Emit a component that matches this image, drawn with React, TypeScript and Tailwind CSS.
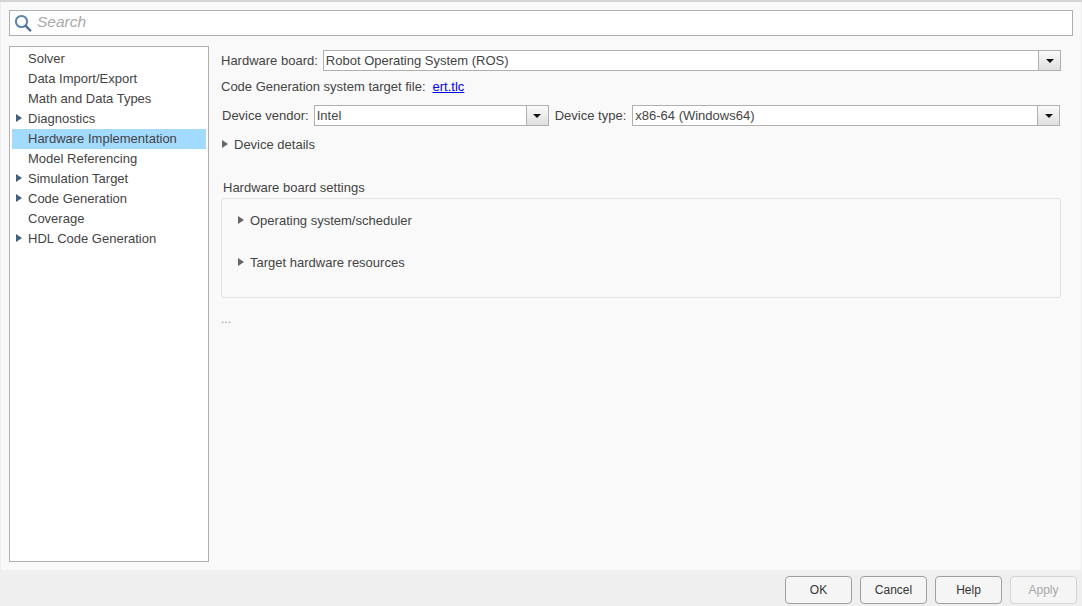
import React from 'react';

const treeItems = [
  { label: 'Solver' },
  { label: 'Data Import/Export' },
  { label: 'Math and Data Types' },
  { label: 'Diagnostics', arrow: true },
  { label: 'Hardware Implementation', selected: true },
  { label: 'Model Referencing' },
  { label: 'Simulation Target', arrow: true },
  { label: 'Code Generation', arrow: true },
  { label: 'Coverage' },
  { label: 'HDL Code Generation', arrow: true },
];

const Caret = () => (
  <svg className="w-[6px] h-[8px] shrink-0 -translate-y-px" viewBox="0 0 6 8">
    <path d="M0 0l6 4L0 8z" fill="#666666" />
  </svg>
);

const ComboArrow = () => (
  <span className="w-[22px] h-full shrink-0 flex items-center justify-center border-l border-[#b0b0b0] bg-gradient-to-b from-[#fafafa] to-[#dfdfdf]">
    <svg className="w-[8px] h-[4px]" viewBox="0 0 8 4">
      <path d="M0 0h8L4 4z" fill="#111111" />
    </svg>
  </span>
);

const Combo = ({ value, className }: { value: string; className: string }) => (
  <div className={`h-[21px] flex items-center bg-white border border-[#b0b0b0] ${className}`}>
    <span className="flex-1 pl-[2px] text-[#444444] truncate">{value}</span>
    <ComboArrow />
  </div>
);

const Footer = ({ label, disabled }: { label: string; disabled?: boolean }) => (
  <button
    className={`w-[67px] h-[28px] rounded-[4px] border bg-[#f5f5f5] text-[12px] ${
      disabled ? 'border-[#d4d4d4] text-[#a8a8a8]' : 'border-[#a0a0a0] text-[#333333]'
    }`}
  >
    {label}
  </button>
);

export default function App() {
  return (
    <div className="w-[1082px] h-[606px] flex flex-col overflow-hidden bg-[#efefef] font-['Liberation_Sans',sans-serif] text-[13px] text-[#444444]">
      <div className="h-[2px] bg-[#d4d4d4]" />

      <div className="flex-1 min-h-0 ml-px mr-px flex flex-col bg-[#f9f9f9] pt-[8px] pb-[8px] pl-[8px] pr-[8px]">
        {/* Search */}
        <div className="h-[26px] flex items-center bg-white border border-[#b0b0b0] pl-[4px]">
          <svg className="w-[18px] h-[18px] shrink-0" viewBox="0 0 18 18" fill="none">
            <circle cx="7.5" cy="7.5" r="5.6" stroke="#5b84ad" strokeWidth="2" />
            <path d="M11.8 12l4.4 4.4" stroke="#4a6f94" strokeWidth="2.4" strokeLinecap="round" />
          </svg>
          <span className="ml-[5px] text-[15.5px] leading-[20px] -translate-y-px italic text-[#a9a9a9]">Search</span>
        </div>

        <div className="flex-1 min-h-0 flex mt-[10px]">
          {/* Tree */}
          <div className="w-[200px] shrink-0 bg-white border border-[#b0b0b0] pt-[2px] pl-[2px] pr-[2px]">
            {treeItems.map(item => (
              <div
                key={item.label}
                className={`h-[20px] flex items-center ${item.selected ? 'bg-[#a3daff]' : ''}`}
              >
                <span className="w-[16px] pl-[4px] flex items-center">
                  {item.arrow && (
                    <svg className="w-[6px] h-[8px] -translate-y-px" viewBox="0 0 6 8">
                      <path d="M0 0l6 4L0 8z" fill="#42617f" />
                    </svg>
                  )}
                </span>
                <span>{item.label}</span>
              </div>
            ))}
          </div>

          {/* Settings pane */}
          <div className="flex-1 min-w-0 pl-[12px] pr-[12px] pt-[4px]">
            <div className="flex items-center h-[21px]">
              <span className="mr-[5px]">Hardware board:</span>
              <Combo value="Robot Operating System (ROS)" className="flex-1" />
            </div>

            <div className="flex items-center h-[16px] mt-[8px]">
              <span>Code Generation system target file:</span>
              <a className="ml-[7px] text-[#0000ee] underline">ert.tlc</a>
            </div>

            <div className="flex items-center h-[21px] mt-[10px] pl-px">
              <span className="mr-[5px]">Device vendor:</span>
              <Combo value="Intel" className="w-[235px]" />
              <span className="ml-[6px] mr-[6px]">Device type:</span>
              <Combo value="x86-64 (Windows64)" className="flex-1 mr-px" />
            </div>

            <div className="flex items-center h-[16px] mt-[11px] pl-px">
              <Caret />
              <span className="ml-[6px]">Device details</span>
            </div>

            <div className="mt-[27px] pl-[2px] h-[16px] flex items-center">Hardware board settings</div>

            <div className="mt-[2px] h-[100px] rounded-[3px] border border-[#e2e2e2] pt-[14px] pl-[16px]">
              <div className="flex items-center h-[16px]">
                <Caret />
                <span className="ml-[6px]">Operating system/scheduler</span>
              </div>
              <div className="flex items-center h-[16px] mt-[26px]">
                <Caret />
                <span className="ml-[6px]">Target hardware resources</span>
              </div>
            </div>

            <div className="mt-[13px] text-[#999999] text-[12px] leading-[16px]">...</div>
          </div>
        </div>
      </div>

      {/* Footer buttons */}
      <div className="h-[36px] shrink-0 flex items-start justify-end gap-[8px] pr-[5px] pt-[6px]">
        <Footer label="OK" />
        <Footer label="Cancel" />
        <Footer label="Help" />
        <Footer label="Apply" disabled />
      </div>
    </div>
  );
}
